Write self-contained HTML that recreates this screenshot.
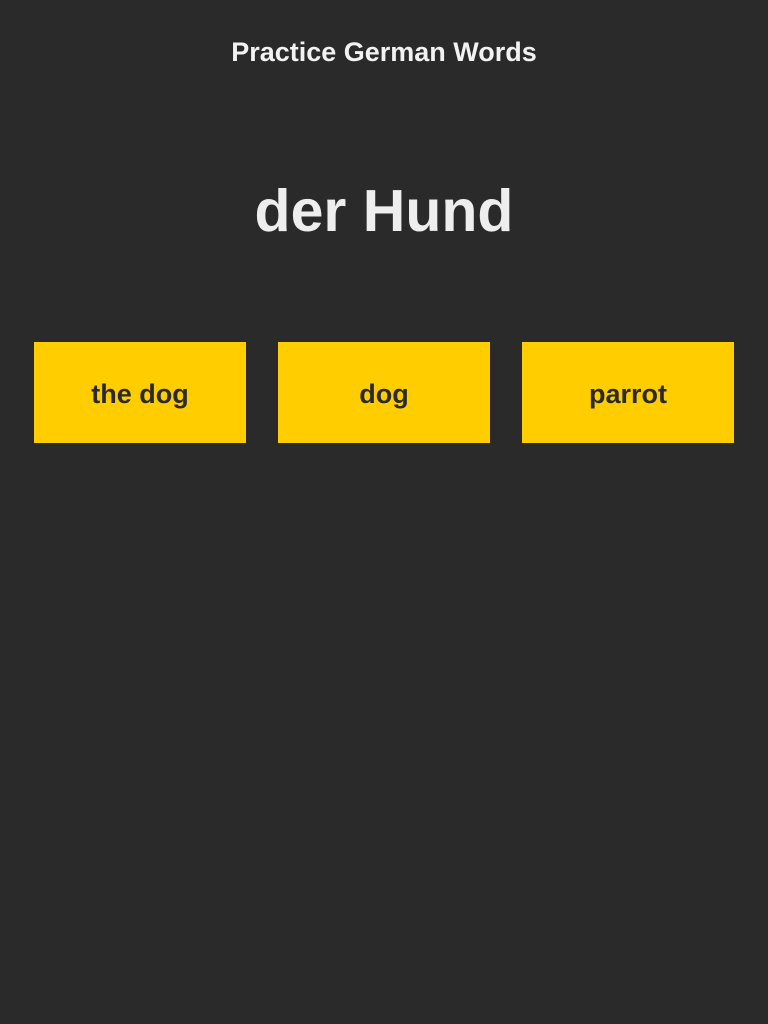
<!DOCTYPE html>
<html><head><style>
html,body{margin:0;padding:0;background:#2a2a2a;width:768px;height:1024px;overflow:hidden;font-family:"Liberation Sans",sans-serif;}
.t{position:absolute;top:34px;left:0;width:768px;text-align:center;color:#f2f2f2;font-size:27px;font-weight:bold;line-height:36px;}
.w{position:absolute;top:171px;left:0;width:768px;text-align:center;color:#eeeeee;font-size:59px;font-weight:bold;line-height:80px;}
.b{position:absolute;top:342px;width:212px;height:101px;background:#ffcd00;color:#2a2a2a;font-size:27px;font-weight:bold;display:flex;align-items:center;justify-content:center;padding-top:4px;box-sizing:border-box;}
</style></head><body>
<div class="t">Practice German Words</div>
<div class="w">der Hund</div>
<div class="b" style="left:34px">the dog</div>
<div class="b" style="left:278px">dog</div>
<div class="b" style="left:522px">parrot</div>
</body></html>
